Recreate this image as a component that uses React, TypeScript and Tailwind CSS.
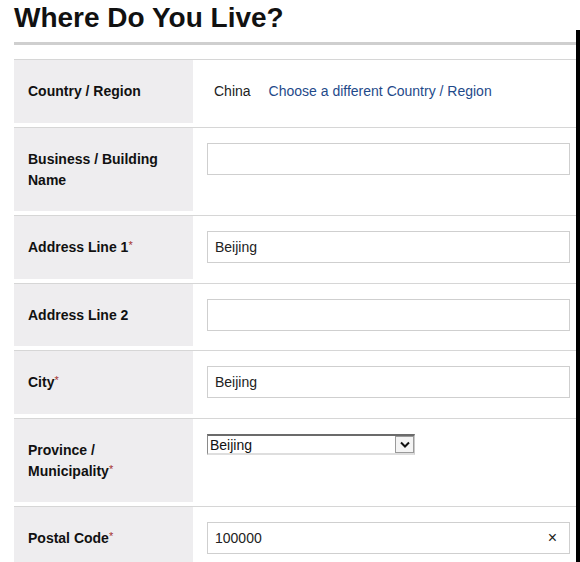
type Row = {
  label: string[];
  required?: boolean;
  kind: "country" | "input" | "select" | "postal";
  value?: string;
};

const rows: Row[] = [
  { label: ["Country / Region"], kind: "country" },
  { label: ["Business / Building", "Name"], kind: "input", value: "" },
  { label: ["Address Line 1"], required: true, kind: "input", value: "Beijing" },
  { label: ["Address Line 2"], kind: "input", value: "" },
  { label: ["City"], required: true, kind: "input", value: "Beijing" },
  { label: ["Province /", "Municipality"], required: true, kind: "select", value: "Beijing" },
  { label: ["Postal Code"], required: true, kind: "postal", value: "100000" },
];

function Star() {
  return <span className="relative -top-[3px] text-[11px] font-normal leading-[0] text-[#a5312f]">*</span>;
}

function TextBox({ value, clear }: { value?: string; clear?: boolean }) {
  return (
    <div className="flex h-[32px] items-center border border-[#cfcfcf] bg-white px-[7px] text-[14px] text-[#222]">
      <span className="flex-1">{value}</span>
      {clear && <span className="mr-[5px] text-[16px] leading-none text-[#222]">×</span>}
    </div>
  );
}

function Dropdown({ value }: { value?: string }) {
  return (
    <div className="flex h-[21px] w-[208px] items-stretch border-t-2 border-l border-b-2 border-r border-t-[#6b6b6b] border-l-[#8a8a8a] border-b-[#dedede] border-r-[#c9c9c9] bg-white">
      <span className="flex-1 pl-[2px] text-[14px] leading-[18px] text-[#111]">{value}</span>
      <span className="flex w-[19px] items-center justify-center border border-[#9a9a9a] bg-[#f4f4f4]">
        <svg width="10" height="7" viewBox="0 0 10 7">
          <path d="M1 1.5 L5 5.5 L9 1.5" fill="none" stroke="#111" strokeWidth="2" />
        </svg>
      </span>
    </div>
  );
}

export default function App() {
  return (
    <div className="flex min-h-[562px] bg-white font-['Liberation_Sans',Arial,sans-serif]">
      <div className="flex-1 pl-[14px]">
        <h1 className="mt-[2px] text-[28px] font-bold leading-[32px] text-[#111]">Where Do You Live?</h1>
        <div className="mt-[8px] h-[3px] bg-[#cfcfcf]" />

        <div className="mt-[14px]">
          {rows.map((row, i) => (
            <div key={i} className="flex border-t border-[#d6d6d6] pb-[4px]">
              <div className="flex w-[179px] items-center bg-[#eeedef] px-[14px] pt-[21.25px] pb-[20.25px] text-[14px] font-bold leading-[21px] text-[#111]">
                <div>
                  {row.label.map((l, j) => (
                    <div key={j}>
                      {l}
                      {row.required && j === row.label.length - 1 && <Star />}
                    </div>
                  ))}
                </div>
              </div>
              <div className="flex-1 pl-[14px] pr-[6px] pt-[15px]">
                {row.kind === "country" && (
                  <div className="flex h-[32px] items-center gap-[18px] pl-[7px] text-[14px]">
                    <span className="text-[#222]">China</span>
                    <span className="text-[#1f4a8a]">Choose a different Country / Region</span>
                  </div>
                )}
                {row.kind === "input" && <TextBox value={row.value} />}
                {row.kind === "postal" && <TextBox value={row.value} clear />}
                {row.kind === "select" && <Dropdown value={row.value} />}
              </div>
            </div>
          ))}
        </div>
      </div>
      <div className="mt-[30px] w-[4px] bg-black" />
    </div>
  );
}
